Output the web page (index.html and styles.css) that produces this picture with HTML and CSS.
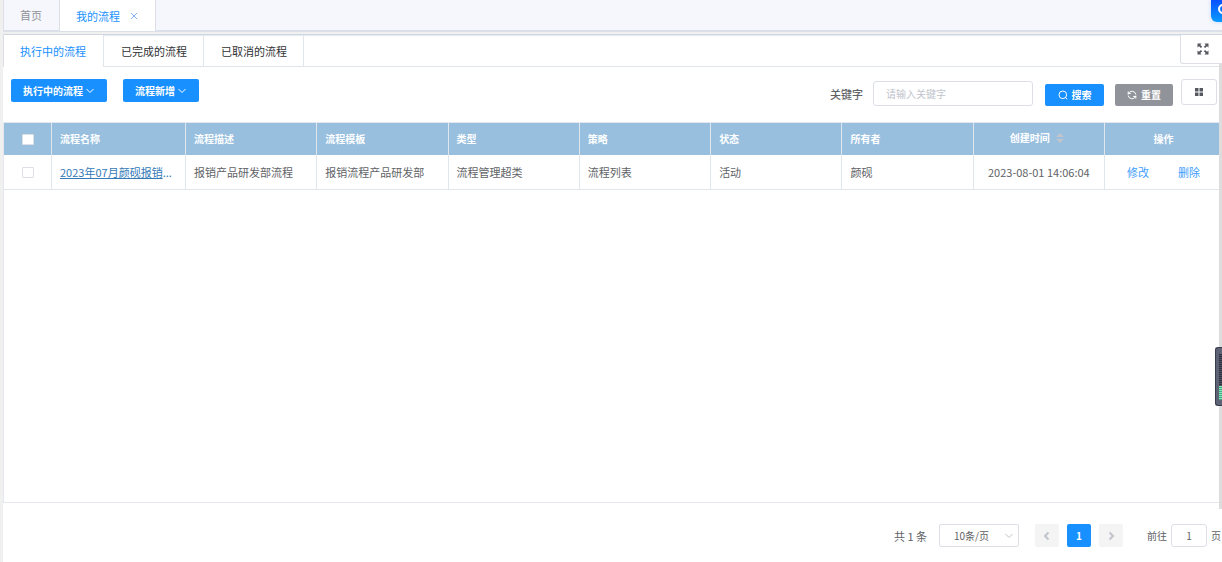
FILE: index.html
```html
<!DOCTYPE html>
<html lang="zh-CN">
<head>
<meta charset="utf-8">
<title>我的流程</title>
<link rel="stylesheet" href="styles.css">
</head>
<body>
<div class="app">
  <nav class="pages">
    <a class="page" href="#home">首页</a>
    <a class="page page-active" href="#mine">我的流程
      <svg class="close" viewBox="0 0 8 8" width="8" height="8"><path d="M1 1l6 6M7 1L1 7"/></svg>
    </a>
  </nav>
  <main class="panel">
    <div class="tabs">
      <button class="tab tab-active" type="button">执行中的流程</button>
      <button class="tab" type="button">已完成的流程</button>
      <button class="tab" type="button">已取消的流程</button>
      <button class="full" type="button" aria-label="全屏">
        <svg viewBox="0 0 12 12" width="12" height="12"><path class="fill" d="M.5.5h4L3.300 1.900 5.200 3.800 3.900 5 2 3.200.5 4.500zM11.500.5h-4l1.200 1.400-1.900 1.900L8.100 5 10 3.200l1.500 1.300zM.5 11.500h4l-1.200-1.400 1.900-1.900L3.900 7 2 8.800.5 7.500zM11.500 11.500h-4l1.200-1.400-1.900-1.900L8.100 7 10 8.800l1.500-1.300z"/></svg>
      </button>
    </div>
    <div class="toolbar">
      <div class="actions">
        <button class="btn" type="button">执行中的流程<svg class="line" viewBox="0 0 10 10" width="10" height="10"><path d="M1.500 3l3.500 3.500L8.500 3"/></svg></button>
        <button class="btn" type="button">流程新增<svg class="line" viewBox="0 0 10 10" width="10" height="10"><path d="M1.500 3l3.500 3.500L8.500 3"/></svg></button>
      </div>
      <form class="search">
        <label class="key" for="keyword">关键字</label>
        <input class="keyword" id="keyword" type="text" placeholder="请输入关键字">
        <button class="btn btn-find" type="button"><svg class="line" viewBox="0 0 10 10" width="10" height="10"><circle cx="4.800" cy="4.800" r="3.800"/><path d="M7.500 7.500L9.300 9.300"/></svg>搜索</button>
        <button class="btn btn-find btn-reset" type="reset"><svg class="line" viewBox="0 0 10 10" width="10" height="10"><path d="M1.200 4.500V1.500M1.200 3.500h2.600M1.500 3.300A3.900 3.900 0 0 1 8.800 4.500M8.800 5.500v3M8.800 6.500H6.200M8.500 6.700A3.900 3.900 0 0 1 1.200 5.500"/></svg>重置</button>
        <button class="grid" type="button" aria-label="列设置"><svg viewBox="0 0 8 8" width="8" height="8"><path class="fill" d="M0 0h3.500v3.500H0zM4.500 0H8v3.500H4.500zM0 4.500h3.500V8H0zM4.500 4.500H8V8H4.500z"/></svg></button>
      </form>
    </div>
    <div class="table-area">
      <table class="table">
        <colgroup><col class="col-check"><col class="col-name"><col><col><col><col><col><col><col><col class="col-op"></colgroup>
        <thead>
          <tr>
            <th class="center"><input class="check" type="checkbox" aria-label="全选"></th>
            <th>流程名称</th><th>流程描述</th><th>流程模板</th><th>类型</th><th>策略</th><th>状态</th><th>所有者</th>
            <th class="center"><span class="sortable">创建时间<svg viewBox="0 0 8 10" width="8" height="10"><path class="caret" d="M0 4l4-4 4 4zM0 6h8l-4 4z"/></svg></span></th>
            <th class="center">操作</th>
          </tr>
        </thead>
        <tbody>
          <tr>
            <td class="center"><input class="check" type="checkbox" aria-label="选择此行"></td>
            <td class="name-cell"><a class="name" href="#flow">2023年07月颜砚报销</a>...</td>
            <td>报销产品研发部流程</td><td>报销流程产品研发部</td><td>流程管理超类</td><td>流程列表</td><td>活动</td><td>颜砚</td>
            <td class="center">2023-08-01 14:06:04</td>
            <td><div class="ops"><a class="op" href="#edit">修改</a><a class="op" href="#delete">删除</a></div></td>
          </tr>
        </tbody>
      </table>
    </div>
    <div class="pager">
      <span class="total">共 1 条</span>
      <span class="size">
        <select class="size-select" aria-label="每页条数"><option>10条/页</option><option>20条/页</option></select>
        <svg class="size-arrow" viewBox="0 0 10 10" width="10" height="10"><path d="M1.500 3l3.500 3.500L8.500 3"/></svg>
      </span>
      <div class="numbers">
        <button class="num" type="button" aria-label="上一页" disabled><svg viewBox="0 0 10 10" width="10" height="10"><path d="M6.500 1.500L3 5l3.500 3.500"/></svg></button>
        <button class="num num-active" type="button">1</button>
        <button class="num" type="button" aria-label="下一页" disabled><svg viewBox="0 0 10 10" width="10" height="10"><path d="M3.500 1.500L7 5 3.500 8.500"/></svg></button>
      </div>
      <label class="jump">前往<input class="jump-input" type="text" value="1">页</label>
    </div>
  </main>
  <div class="scrollbar"></div>
  <div class="assistant"><svg viewBox="0 0 20 20" width="20" height="20"><circle cx="12" cy="9" r="4"/></svg></div>
  <div class="meter"><div class="bars"></div><div class="bars bars-on"></div></div>
</div>
</body>
</html>
```
FILE: styles.css
```css
* { box-sizing: border-box; }
body {
  margin: 0;
  background: #f0f0f0;
  color: #606266;
  font: 11px/16px "Noto Sans CJK SC", sans-serif;
}
button, input, select { font: inherit; color: inherit; }
button { cursor: pointer; padding: 0; }
a { text-decoration: none; }
svg { flex: none; fill: none; }
.fill { fill: #55585e; }

.app {
  position: relative;
  display: flex;
  flex-direction: column;
  min-height: 100vh;
  padding-left: 3px;
  overflow: hidden;
}
.pages {
  display: flex;
  height: 32px;
  background: #f5f7fc;
  border-left: 1px solid #dcdfe6;
  border-bottom: 2px solid #dce1e9;
}
.page {
  display: flex;
  align-items: center;
  gap: 10px;
  padding: 0 17px 0 16px;
  color: #909399;
  border-right: 1px solid #dcdfe6;
}
.page-active { background: #fff; color: #1890ff; height: 31px; }
.close { stroke: #85b4f5; }

.panel {
  display: flex;
  flex: 1;
  flex-direction: column;
  margin-top: 2px;
  background: #fff;
}
.tabs {
  display: flex;
  height: 33px;
  border-top: 1px solid #cfd8e0;
  border-left: 1px solid #dcdfe6;
  border-bottom: 1px solid #dfe4ed;
  box-shadow: inset 0 1px 1px #e6eaee;
}
.tab {
  height: 32px;
  padding: 0 16px 0 17px;
  border: 0;
  border-right: 1px solid #dfe4ed;
  background: none;
  color: #303133;
}
.tab-active { padding: 0 17px 0 16px; background: #fff; color: #1890ff; }
.full {
  display: flex;
  align-items: center;
  justify-content: center;
  width: 42px;
  height: 29px;
  margin-left: auto;
  padding-left: 2px;
  border: solid #dcdfe6;
  border-width: 0 0 1px 1px;
  border-radius: 0 0 0 3px;
  background: #fff;
}

.toolbar {
  display: flex;
  align-items: flex-start;
  justify-content: space-between;
  height: 55px;
  padding: 12px 5px 0 8px;
}
.actions { display: flex; gap: 16px; }
.btn {
  display: flex;
  align-items: center;
  justify-content: center;
  gap: 2px;
  height: 23px;
  padding: 0 12px;
  border: 0;
  border-radius: 2px;
  background: #1890ff;
  color: #fff;
  font-size: 10px;
  font-weight: 700;
}
.line { stroke: #fff; }
.search { display: flex; align-items: flex-end; }
.key { margin: 0 10px 4px 0; font-weight: 500; }
.keyword {
  width: 160px;
  height: 25px;
  margin-right: 12px;
  padding: 0 12px;
  border: 1px solid #dcdfe6;
  border-radius: 3px;
  font-size: 10px;
  outline: 0;
}
.keyword::placeholder { color: #c0c4cc; }
.btn-find { width: 59px; height: 22px; margin-right: 11px; gap: 4px; }
.btn-reset { width: 58px; margin-right: 8px; background: #909399; }
.grid {
  display: flex;
  align-items: center;
  justify-content: center;
  align-self: flex-start;
  width: 36px;
  height: 26px;
  margin-bottom: 1px;
  border: 1px solid #dcdfe6;
  border-radius: 3px;
  background: #fff;
}

.table-area {
  flex: 1;
  border: solid #e4e7ed;
  border-width: 1px 0 1px 1px;
}
.table { width: 100%; table-layout: fixed; border-spacing: 0; }
.col-check { width: 48px; }
.col-name { width: 134px; }
.col-op { width: 117px; }
.table th, .table td {
  padding: 0 8px;
  border-right: 1px solid #dfe6ec;
  overflow: hidden;
  text-align: left;
  white-space: nowrap;
}
.table th:last-child, .table td:last-child { border-right: 0; }
.table th {
  height: 32px;
  background: #99bfdf;
  color: #fff;
  font-size: 10px;
  font-weight: 700;
}
.table td { height: 35px; border-bottom: 1px solid #dfe6ec; }
.table .center { text-align: center; }
.check {
  display: block;
  width: 12px;
  height: 11px;
  margin: 0 auto;
  appearance: none;
  border: 1px solid #dcdfe6;
  border-radius: 1px;
  background: #fff;
}
.table .name-cell { color: #337ab7; }
.name { color: #337ab7; text-decoration: underline; }
.sortable { display: inline-flex; align-items: center; gap: 6px; padding: 0 4px 3px 0; }
.caret { fill: #c0c4cc; }
.ops { display: flex; justify-content: center; gap: 29px; }
.op { color: #409eff; }

.pager {
  display: flex;
  align-items: center;
  justify-content: flex-end;
  height: 59px;
  padding: 6px 1px 0 0;
  font-size: 10px;
}
.total { margin-right: 12px; font-size: 11px; }
.size { position: relative; margin-right: 16px; }
.size-select {
  display: block;
  width: 80px;
  height: 23px;
  padding: 0 14px;
  appearance: none;
  border: 1px solid #dcdfe6;
  border-radius: 2px;
  background: #fff;
}
.size-arrow { position: absolute; top: 7px; right: 5px; stroke: #c0c4cc; }
.numbers { display: flex; gap: 8px; margin-right: 24px; }
.num {
  display: flex;
  align-items: center;
  justify-content: center;
  width: 24px;
  height: 23px;
  border: 0;
  border-radius: 2px;
  background: #f4f4f5;
  stroke: #c0c4cc;
  stroke-width: 2;
}
.num-active { background: #1890ff; color: #fff; font-weight: 700; stroke: none; }
.jump { display: flex; align-items: center; gap: 4px; }
.jump-input {
  width: 36px;
  height: 23px;
  padding: 0;
  border: 1px solid #dcdfe6;
  border-radius: 3px;
  text-align: center;
}

.scrollbar {
  position: absolute;
  top: 64px;
  right: 0;
  bottom: 53px;
  width: 3px;
  background: #dddddd;
}
.assistant {
  position: absolute;
  top: 0;
  right: -9px;
  width: 20px;
  height: 22px;
  border-radius: 0 0 0 6px;
  background: linear-gradient(#0a50ff, #0a9bff);
  box-shadow: 0 0 4px #c5d6f5;
}
.assistant circle { stroke: #fff; stroke-width: 2; }
.meter {
  position: absolute;
  top: 347px;
  right: 0;
  width: 7px;
  height: 59px;
  padding: 6px 0 0 3px;
  border: solid #383c4c;
  border-width: 1px 0 1px 1px;
  border-radius: 3px 0 0 3px;
  background: #5d6275;
}
.bars { height: 32px; background: repeating-linear-gradient(#303240 0 1px, #4a4e5e 1px 2px); }
.bars-on { height: 14px; background: repeating-linear-gradient(#7cf0b8 0 1px, #4f9f86 1px 2px); }
```
